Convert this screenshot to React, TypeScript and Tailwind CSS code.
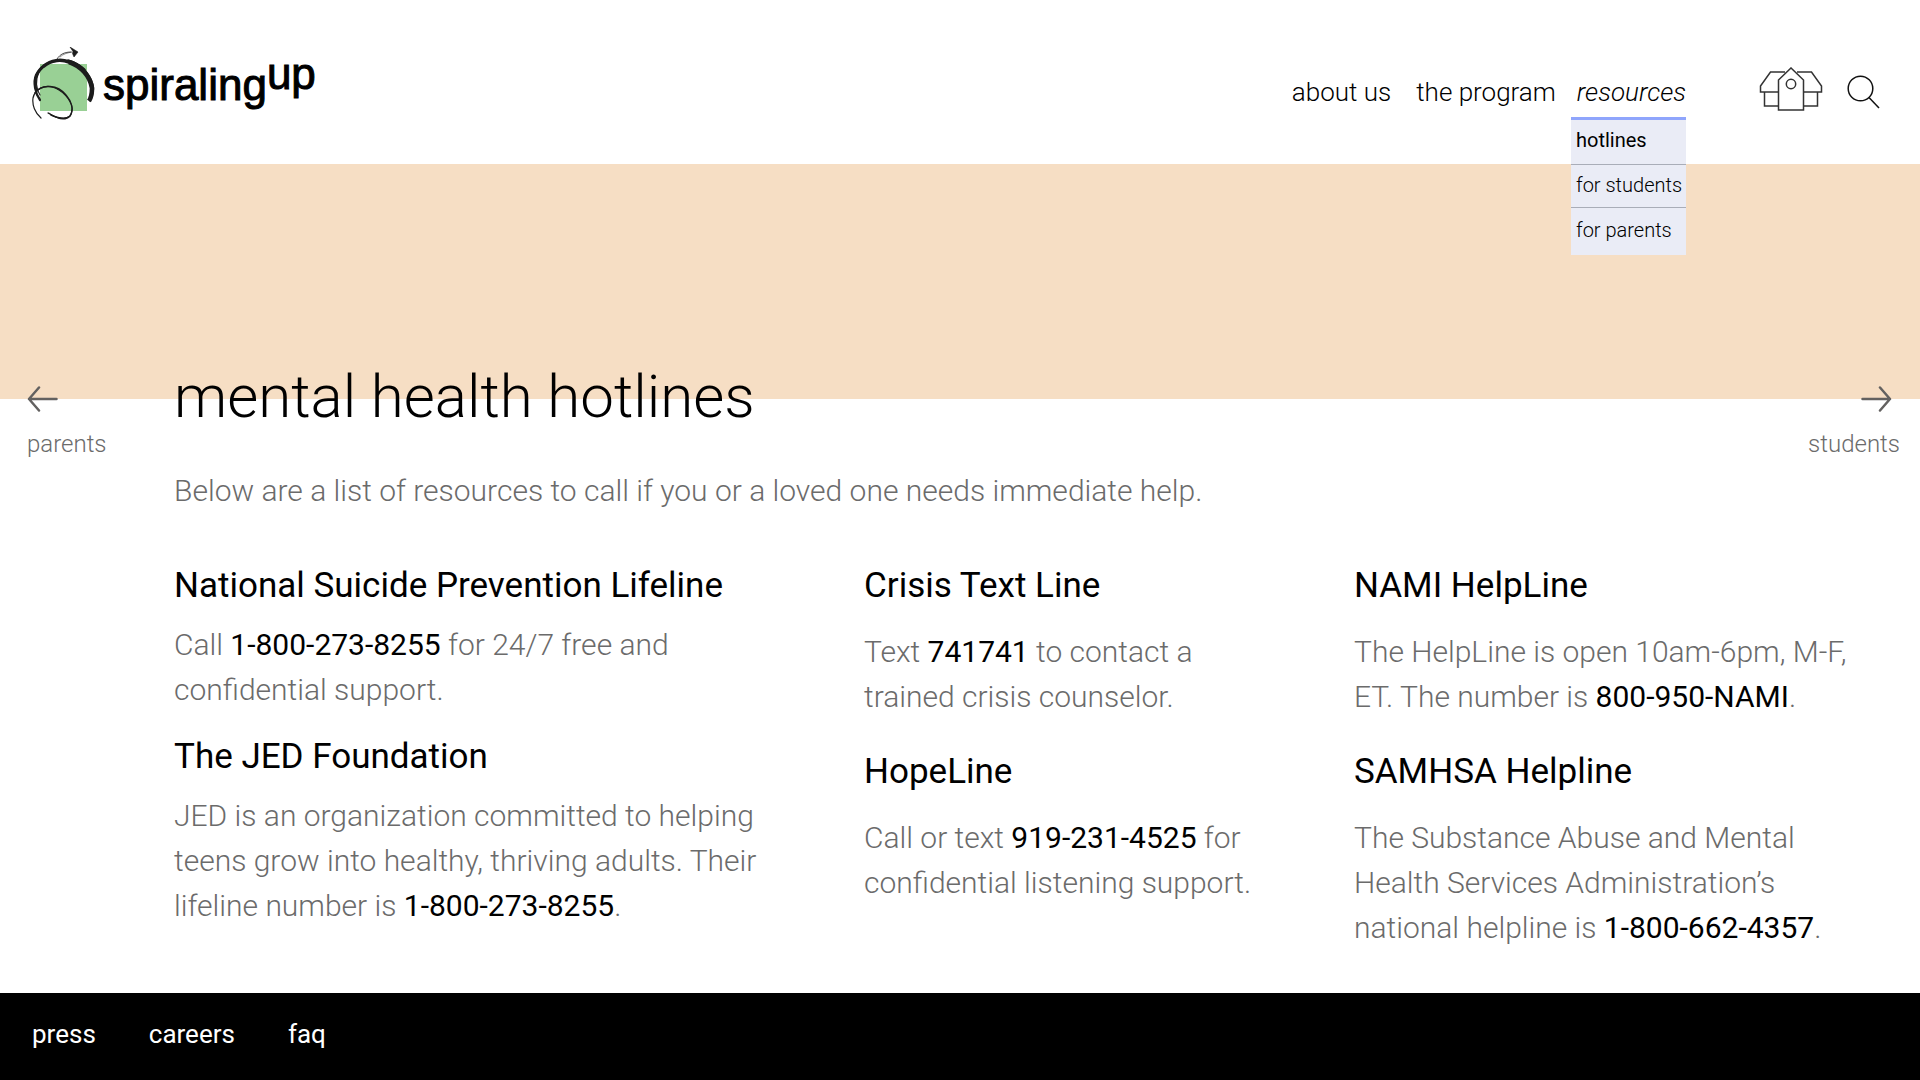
import type { ReactNode } from 'react'

type Hotline = {
  name: string
  body: ReactNode
}

const Phone = ({ children }: { children: ReactNode }) => (
  <strong className="font-normal text-black">{children}</strong>
)

const firstColumn: Hotline[] = [
  {
    name: 'National Suicide Prevention Lifeline',
    body: (
      <>
        Call <Phone>1-800-273-8255</Phone> for 24/7 free and confidential support.
      </>
    ),
  },
  {
    name: 'The JED Foundation',
    body: (
      <>
        JED is an organization committed to helping teens grow into healthy, thriving adults. Their
        lifeline number is <Phone>1-800-273-8255</Phone>.
      </>
    ),
  },
]

const secondColumn: Hotline[] = [
  {
    name: 'Crisis Text Line',
    body: (
      <>
        Text <Phone>741741</Phone> to contact a trained crisis counselor.
      </>
    ),
  },
  {
    name: 'HopeLine',
    body: (
      <>
        Call or text <Phone>919-231-4525</Phone> for confidential listening support.
      </>
    ),
  },
]

const thirdColumn: Hotline[] = [
  {
    name: 'NAMI HelpLine',
    body: (
      <>
        The HelpLine is open 10am-6pm, M-F, ET. The number is <Phone>800-950-NAMI</Phone>.
      </>
    ),
  },
  {
    name: 'SAMHSA Helpline',
    body: (
      <>
        The Substance Abuse and Mental Health Services Administration’s national helpline is{' '}
        <Phone>1-800-662-4357</Phone>.
      </>
    ),
  },
]

const HotlineItem = ({ item, gap }: { item: Hotline; gap: string }) => (
  <section className={`flex flex-col ${gap}`}>
    <h2 className="text-[35px] leading-[45px] text-black">{item.name}</h2>
    <p className="text-[30px] leading-[45px] font-light text-[#6b6b6b]">{item.body}</p>
  </section>
)

const Logo = () => (
  <a href="#" className="flex items-start gap-1 text-black">
    <svg width="67" height="76" viewBox="0 0 67 76" fill="none" aria-hidden="true">
      <rect x="8" y="17" width="47" height="47" fill="#99d095" />
      <g stroke="#1c1c1c" strokeLinecap="round">
        {/* big loop, heavier towards the right side */}
        <path d="M8 53C3 46 1 35 4 28C8 19 17 14 26 14" strokeWidth="2.200" />
        <path d="M8 48C4 42 3 33 7 25C10 19 17 15 25 13" strokeWidth="1.200" />
        <path d="M4 42C2 33 5 25 11 20" strokeWidth="2.500" />
        <path d="M12 19C19 13 29 12 37 15C43 17 48 19 52 23" strokeWidth="3.500" />
        <path d="M37 15C49 19 58 29 60 41C60 47 59 51 57 54" strokeWidth="4.600" strokeLinecap="butt" />
        <path d="M36 13C48 16 58 26 61 38C62 43 61 49 58 54" strokeWidth="1.500" />
        {/* small loop */}
        <path d="M9 71C3 66 0 58 1 51C3 42 12 38 20 40C31 43 39 53 40 61C40 68 37 72 31 72C26 72 21 69 16 66" strokeWidth="1.200" />
        <path d="M3 46C10 36 26 38 34 48C40 55 42 63 38 69C34 73 26 71 19 68" strokeWidth="1.500" />
        <path d="M17 66C23 71 31 73 36 70" strokeWidth="1" />
        {/* tail of the arrow */}
        <path d="M25 12C28 7 33 5 39 5" strokeWidth="0.800" />
        <path d="M28 10C31 7 35 6 40 5" strokeWidth="0.500" />
      </g>
      <path d="M38 0L46 5L42 10L40.500 6.500L41 4.500Z" fill="#1c1c1c" stroke="#1c1c1c" strokeWidth="0.600" />
    </svg>
    <span className="flex font-['Liberation_Sans',Arial,sans-serif] text-[44px] leading-[54px] [-webkit-text-stroke:1px_black]">
      <span className="pt-[11px]">spiraling</span>
      <span>up</span>
    </span>
  </a>
)

const SchoolIcon = () => (
  <svg width="64" height="46" viewBox="0 0 64 46" fill="none" stroke="#333" strokeWidth="1.5" aria-hidden="true">
    <path d="M19 25H1.500V19L11.500 5H26" />
    <path d="M44 25H62.500V19L52.500 5H38" />
    <path d="M5.500 25V39H19M58.500 25V39H44" />
    <path d="M19.500 43V13L32 1L44.500 13V43Z" />
    <circle cx="32" cy="17" r="4.700" />
  </svg>
)

const SearchIcon = () => (
  <svg width="34" height="34" viewBox="0 0 34 34" fill="none" stroke="#111" strokeWidth="1.5" aria-hidden="true">
    <circle cx="13.500" cy="13.500" r="12.300" />
    <path d="M22 22.500L32 33" />
  </svg>
)

const Header = () => (
  <header className="flex h-[164px] items-start justify-between pr-[39px] pl-8">
    <div className="pt-[47px]">
      <Logo />
    </div>
    <div className="flex items-start pt-[67px]">
      <nav className="flex gap-[25px] text-[26px] leading-[50px] font-light text-black">
        <a href="#">about us</a>
        <a href="#">the program</a>
        <div className="relative -ml-1">
          <a href="#" className="italic">
            resources
          </a>
          <ul className="absolute top-[50px] right-0 w-[115px] divide-y divide-[#a9adb8] border-t-[3px] border-[#8fa5fc] bg-[#eaecf6] text-[20px] leading-10 whitespace-nowrap">
            <li className="pb-1 pl-[5px] font-normal">
              <a href="#">hotlines</a>
            </li>
            <li className="pb-0.5 pl-[5px]">
              <a href="#">for students</a>
            </li>
            <li className="pt-0.5 pb-[5px] pl-[5px]">
              <a href="#">for parents</a>
            </li>
          </ul>
        </div>
      </nav>
      <a href="#" aria-label="school" className="ml-[73px]">
        <SchoolIcon />
      </a>
      <button type="button" aria-label="search" className="mt-2 ml-6">
        <SearchIcon />
      </button>
    </div>
  </header>
)

const Arrow = ({ flip = false }: { flip?: boolean }) => (
  <svg
    width="31"
    height="26"
    viewBox="0 0 31 26"
    fill="none"
    stroke="#636160"
    strokeWidth="2.5"
    strokeLinecap="round"
    strokeLinejoin="round"
    className={flip ? 'scale-x-[-1]' : ''}
    aria-hidden="true"
  >
    <path d="M12 1.500L2 13L12 24.500M2 13H29.500" />
  </svg>
)

const Footer = () => (
  <footer className="bg-black px-8 pt-[22px] pb-[26px]">
    <nav className="flex gap-[53px] text-[26px] leading-[39px] text-white">
      <a href="#">press</a>
      <a href="#">careers</a>
      <a href="#">faq</a>
    </nav>
  </footer>
)

export const App = () => (
  <div className="flex min-h-screen flex-col bg-white font-[Roboto,sans-serif]">
    <Header />
    <div className="h-[235px] bg-[#f6dec4]" />

    <main className="-mt-[38px] flex-1 pb-10">
      <div className="flex items-start">
        <a
          href="#"
          className="flex w-[174px] shrink-0 flex-col items-start gap-4 pt-[25px] pl-[27px] text-[24px] leading-8 font-light text-[#6b6b6b]"
        >
          <Arrow />
          parents
        </a>
        <div className="flex-1">
          <h1 className="text-[60px] leading-[72px] font-light text-black">mental health hotlines</h1>
          <p className="mt-[35px] text-[30px] leading-[45px] font-light text-[#6b6b6b]">
            Below are a list of resources to call if you or a loved one needs immediate help.
          </p>
        </div>
        <a
          href="#"
          className="flex flex-col items-end gap-4 pt-[25px] pr-5 text-[24px] leading-8 font-light text-[#6b6b6b]"
        >
          <div className="pr-2">
            <Arrow flip />
          </div>
          students
        </a>
      </div>

      <div className="mt-[50px] grid grid-cols-[690fr_490fr_566fr] pl-[174px]">
        <div className="flex flex-col gap-[22px] pr-[90px]">
          {firstColumn.map((item) => (
            <HotlineItem key={item.name} item={item} gap="gap-[14px]" />
          ))}
        </div>
        <div className="flex flex-col gap-[30px] pr-[90px]">
          {secondColumn.map((item) => (
            <HotlineItem key={item.name} item={item} gap="gap-[21px]" />
          ))}
        </div>
        <div className="flex flex-col gap-[30px] pr-14">
          {thirdColumn.map((item) => (
            <HotlineItem key={item.name} item={item} gap="gap-[21px]" />
          ))}
        </div>
      </div>
    </main>

    <Footer />
  </div>
)

export default App
